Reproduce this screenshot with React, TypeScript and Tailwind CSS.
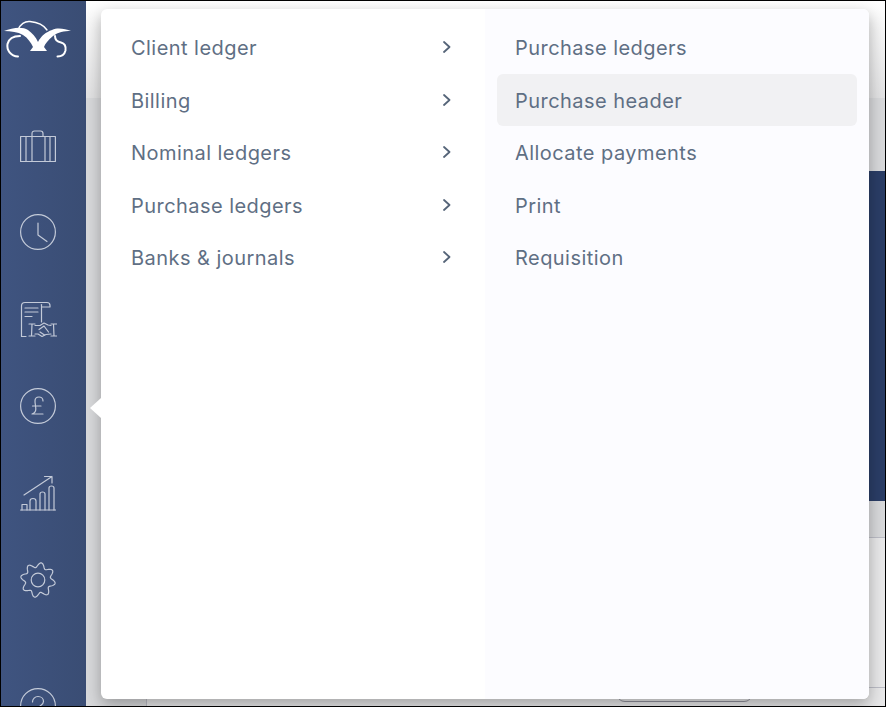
import React from 'react';

const primaryItems = ['Client ledger', 'Billing', 'Nominal ledgers', 'Purchase ledgers', 'Banks & journals'];
const secondaryItems = ['Purchase ledgers', 'Purchase header', 'Allocate payments', 'Print', 'Requisition'];

const iconProps = {
    fill: 'none',
    stroke: '#c3cad8',
    strokeWidth: 1.2,
    strokeLinecap: 'round' as const,
    strokeLinejoin: 'round' as const,
};

// wavy outline of the cog, 8 lobes
const gearPath = () => {
    const pts: string[] = [];
    for (let i = 0; i < 160; i++) {
        const t = (i / 160) * Math.PI * 2;
        const r = 15 + 2.4 * Math.cos(8 * t - Math.PI / 2);
        pts.push(`${(18 + r * Math.cos(t)).toFixed(2)} ${(18 + r * Math.sin(t)).toFixed(2)}`);
    }
    return `M${pts.join('L')}Z`;
};

const Logo = () => (
    <svg width="72" height="40" viewBox="1 20 72 40" className="block">
        <path d="M20 36c-6 0-11 2-12.500 8-1 6 3 12 10.500 12.500" fill="none" stroke="#fff" strokeWidth="2" strokeLinecap="round" />
        <path d="M18 30c2-6 7-9 12-8.500 6 .5 13 2.500 17 8.500" fill="none" stroke="#fff" strokeWidth="1.400" strokeLinecap="round" />
        <path d="M55 36c0 4 3 6 6 6.500 4 1 5 4.500 4.500 8-1 4-4 6-8 6" fill="none" stroke="#fff" strokeWidth="2" strokeLinecap="round" />
        <path d="M4 31C12 28 22 26 28 30C32 33 36 37 38 42C41 36 46 32 52 30C58 27 65 29 71 31C64 31 58 32 53 36C48 40 45 44 44 47L47 51H30L33 47C31 43 28 38 23 35C18 32 11 31 4 31Z" fill="#fff" />
    </svg>
);

const Briefcase = () => (
    <svg width="36" height="33" viewBox="0 0 36 33" {...iconProps}>
        <path d="M.6 6.500h34.800V31.500H.6z" />
        <path d="M6 6.500v25M12 6.500v25M25 6.500v25M30 6.500v25" />
        <path d="M12 6.500V3.500C12 1.800 13 1 14.500 1h6C22 1 23 1.800 23 3.500v3" />
    </svg>
);

const Clock = () => (
    <svg width="36" height="36" viewBox="0 0 36 36" {...iconProps}>
        <circle cx="18" cy="18" r="17.400" />
        <path d="M18 9v12l9 6.500" />
    </svg>
);

const Contract = () => (
    <svg width="37" height="36" viewBox="0 0 37 36" {...iconProps}>
        <path d="M6 35.500H1.500V5C1.500 3 3 1.500 5 1.500h22c2 0 3 1.500 3 3V6h-8.500" />
        <path d="M21.500 3.500V21" />
        <path d="M5 7h13M5 11h13M5 15.500h7" />
        <path d="M9 23h6M9 35h6M12 23l-.5 12M31 23h5.500M31 35h5.500M33.500 23l.5 12" />
        <path d="M15 24.500h5l4-2.500 4 2 3 .5M15 33h3l4 2.500 4-2 5-.5" />
        <path d="M19 28.500l5-3.500 4.500 6M20 31l4.500 3" />
    </svg>
);

const Pound = () => (
    <svg width="36" height="36" viewBox="0 0 36 36" {...iconProps}>
        <circle cx="18" cy="18" r="17.400" />
        <path d="M23 13c0-2.500-2-4-4-4-2.500 0-4 1.800-4 4 0 3 .8 5 .8 8 0 2-.8 4-3.800 5h11M12.500 18h8.500" />
    </svg>
);

const Growth = () => (
    <svg width="36" height="36" viewBox="0 0 36 36" {...iconProps}>
        <path d="M.6 35h35" />
        <path d="M2 35v-5.500h5V35M10 35V26c0-1.500 1.200-2.500 3-2.500s3 1 3 2.500v9M20 35V19c0-1 1-2 2.500-2s2.500 1 2.500 2v16M29 35V13c0-1 1-2 2.500-2s2.500 1 2.500 2v22" />
        <path d="M4 20L32 1.500M24.500 1.500H32V8" />
    </svg>
);

const Gear = () => (
    <svg width="36" height="36" viewBox="0 0 36 36" {...iconProps}>
        <circle cx="18" cy="18" r="6.800" />
        <path d={gearPath()} />
    </svg>
);

const Help = () => (
    <svg width="36" height="36" viewBox="0 0 36 36" {...iconProps} className="mt-[39px] block shrink-0">
        <circle cx="18" cy="18" r="17.400" />
        <path d="M12.500 14c0-3 2.500-5.500 5.500-5.500s5.500 2 5.500 5c0 4-5.500 4-5.500 8v2" />
    </svg>
);

const Chevron = () => (
    <svg width="10" height="12" viewBox="0 0 10 12" fill="none" stroke="#566579" strokeWidth="1.800" strokeLinecap="round" strokeLinejoin="round">
        <path d="M2 1l5.500 5L2 11" />
    </svg>
);

const Sidebar = () => (
    <aside className="flex h-full w-[85px] shrink-0 flex-col items-start overflow-hidden bg-gradient-to-r from-[#3f5480] to-[#3a4d74]">
        <div className="mt-[19px]"><Logo /></div>
        <div className="mt-[70px] ml-[19px] flex flex-col gap-[51px]">
            <Briefcase />
            <Clock />
            <Contract />
            <Pound />
            <Growth />
            <Gear />
            <Help />
        </div>
    </aside>
);

export default function App() {
    return (
        <div className="relative h-[707px] w-[886px] overflow-hidden border border-black bg-[#d8d9db] font-['Inter','Open_Sans',sans-serif]">
            <div className="flex h-full">
                <Sidebar />
                {/* dimmed page behind the menu */}
                <div className="flex h-full min-w-0 flex-1 flex-col">
                    <div className="h-[97px] bg-gradient-to-b from-[#ffffff] to-[#e2e2e3]" />
                    <div className="h-[73px]" />
                    <div className="ml-[60px] h-[330px] bg-[#2a3d66]" />
                    <div className="ml-[60px] h-[37px] border-b border-[#bcbdc6]" />
                    <div className="ml-[60px] h-[150px] border-b border-l border-[#bcbdc6] bg-[#e8e8e9]" />
                    <div className="ml-[60px] flex-1 border-l border-[#bcbdc6] bg-[#e8e8e9]">
                        <div className="mt-[-4px] ml-[470px] h-[18px] w-[135px] rounded-b-lg border-b border-[#8f8f9a]" />
                    </div>
                </div>
            </div>

            {/* menu popover */}
            <div className="absolute top-2 left-[100px] flex h-[690px] w-[768px] overflow-hidden rounded-md bg-white shadow-[0_6px_16px_rgba(0,0,0,0.3)]">
                <ul className="w-[384px] pt-[12px] pr-[33px] pl-[30px]">
                    {primaryItems.map((item) => (
                        <li key={item} className="flex h-[52.5px] items-center justify-between text-[20px] tracking-[0.45px] text-[#5f6f84]">
                            <span className="pt-[2px]">{item}</span>
                            <Chevron />
                        </li>
                    ))}
                </ul>
                <ul className="flex-1 bg-[#fcfcff] px-3 pt-[12px]">
                    {secondaryItems.map((item) => (
                        <li
                            key={item}
                            className={`flex h-[52.5px] items-center rounded-md px-[18px] pt-[2px] text-[20px] tracking-[0.45px] text-[#5f6f84] ${item === 'Purchase header' ? 'bg-[#f1f1f3]' : ''}`}
                        >
                            {item}
                        </li>
                    ))}
                </ul>
            </div>
            {/* caret pointing at the active sidebar icon */}
            <div className="absolute top-[397px] left-[89px] h-0 w-0 border-t-[10px] border-r-[11px] border-b-[10px] border-t-transparent border-r-white border-b-transparent" />
        </div>
    );
}
